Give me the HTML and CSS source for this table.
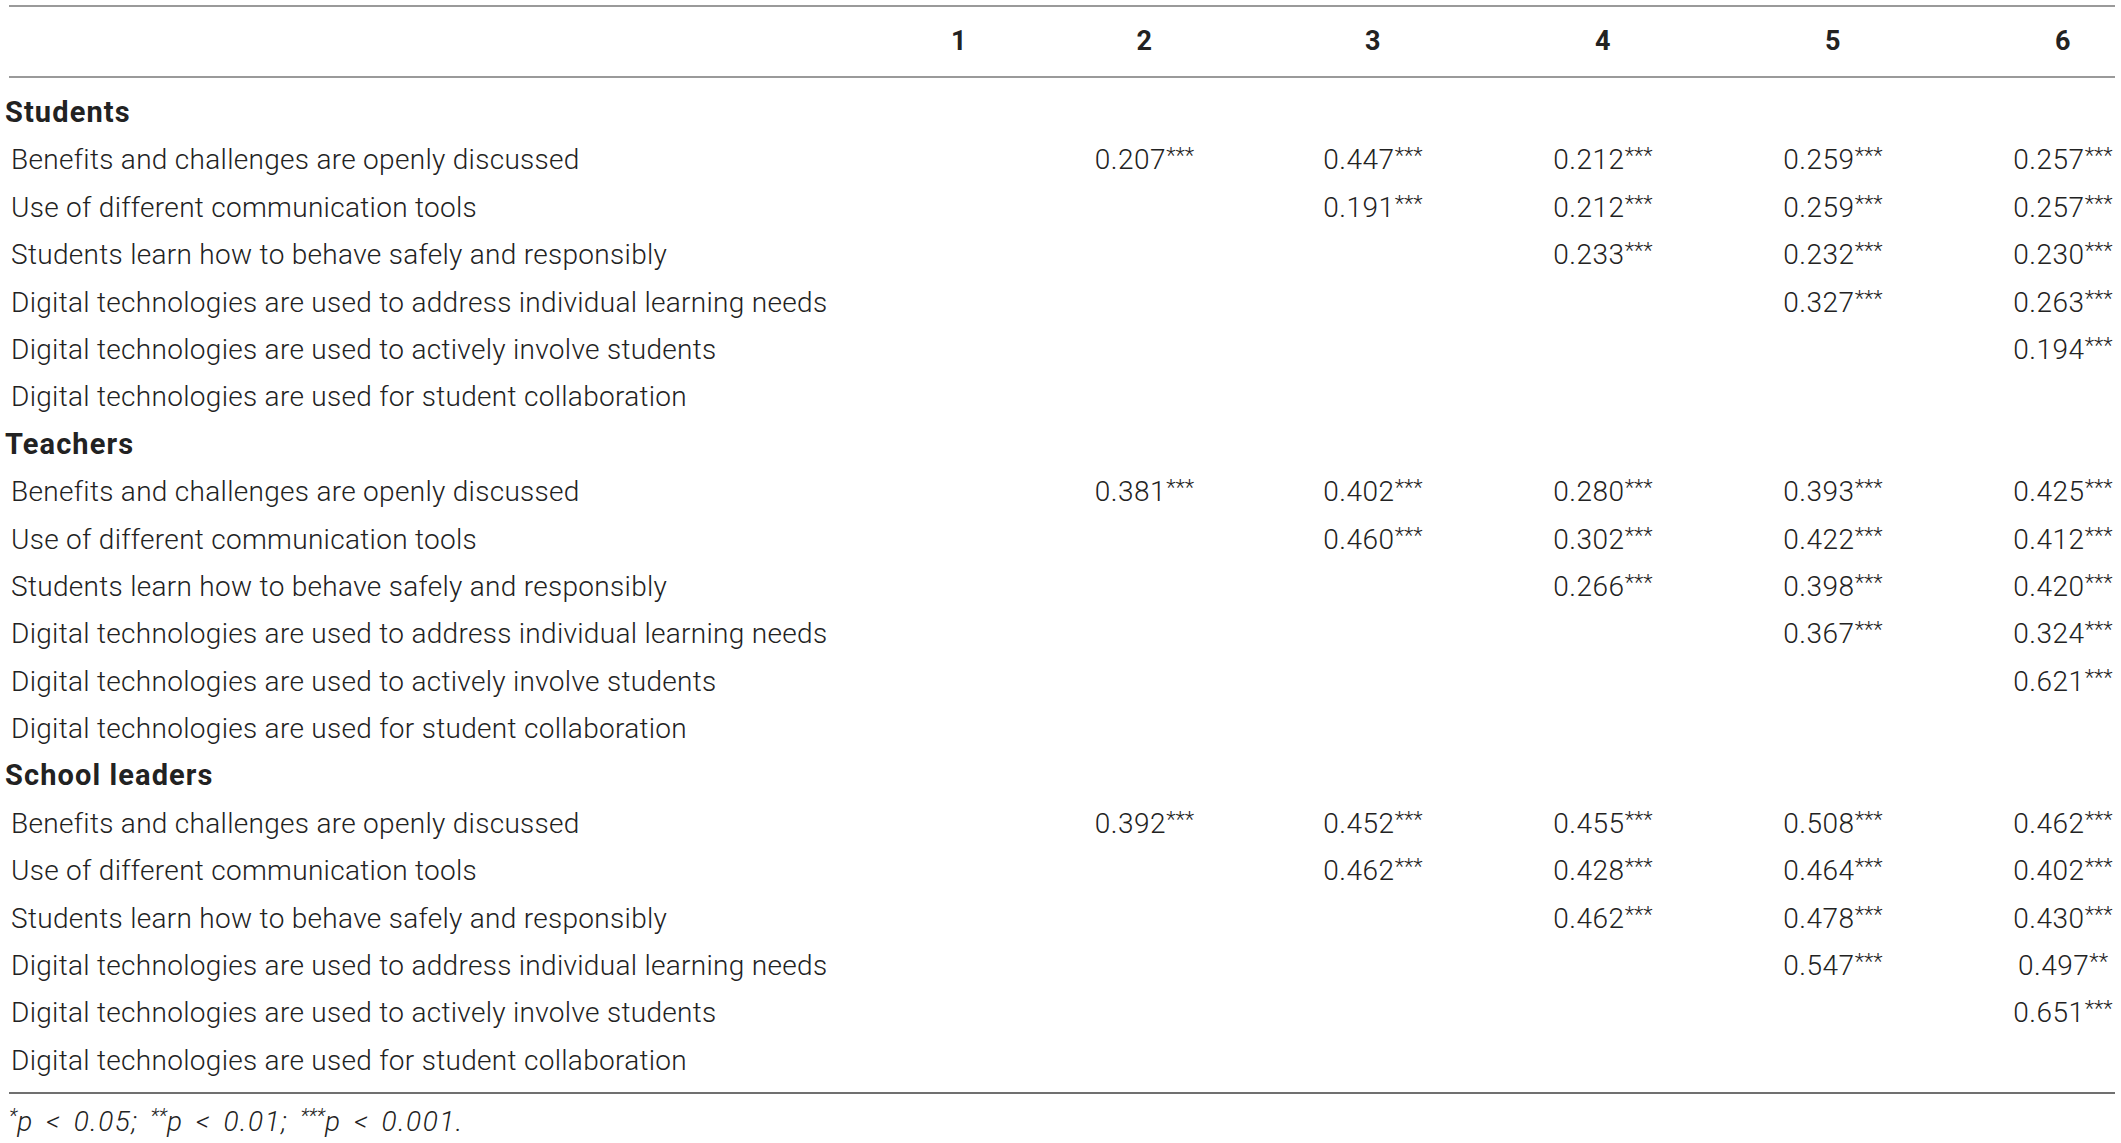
FILE: index.html
```html
<!DOCTYPE html>
<html lang="en">
<head>
<meta charset="utf-8">
<title>Correlations</title>
<link rel="stylesheet" href="styles.css">
</head>
<body>
<div class="table">
  <div class="row head">
    <div class="label"></div>
    <div class="c"><span>1</span></div>
    <div class="c"><span>2</span></div>
    <div class="c"><span>3</span></div>
    <div class="c"><span>4</span></div>
    <div class="c"><span>5</span></div>
    <div class="c"><span>6</span></div>
  </div>
  <div class="body">
    <div class="row group"><div class="label">Students</div></div>
    <div class="row"><div class="label">Benefits and challenges are openly discussed</div><div class="c"></div><div class="c"><span>0.207<sup>***</sup></span></div><div class="c"><span>0.447<sup>***</sup></span></div><div class="c"><span>0.212<sup>***</sup></span></div><div class="c"><span>0.259<sup>***</sup></span></div><div class="c"><span>0.257<sup>***</sup></span></div></div>
    <div class="row"><div class="label">Use of different communication tools</div><div class="c"></div><div class="c"></div><div class="c"><span>0.191<sup>***</sup></span></div><div class="c"><span>0.212<sup>***</sup></span></div><div class="c"><span>0.259<sup>***</sup></span></div><div class="c"><span>0.257<sup>***</sup></span></div></div>
    <div class="row"><div class="label">Students learn how to behave safely and responsibly</div><div class="c"></div><div class="c"></div><div class="c"></div><div class="c"><span>0.233<sup>***</sup></span></div><div class="c"><span>0.232<sup>***</sup></span></div><div class="c"><span>0.230<sup>***</sup></span></div></div>
    <div class="row"><div class="label">Digital technologies are used to address individual learning needs</div><div class="c"></div><div class="c"></div><div class="c"></div><div class="c"></div><div class="c"><span>0.327<sup>***</sup></span></div><div class="c"><span>0.263<sup>***</sup></span></div></div>
    <div class="row"><div class="label">Digital technologies are used to actively involve students</div><div class="c"></div><div class="c"></div><div class="c"></div><div class="c"></div><div class="c"></div><div class="c"><span>0.194<sup>***</sup></span></div></div>
    <div class="row"><div class="label">Digital technologies are used for student collaboration</div></div>

    <div class="row group"><div class="label">Teachers</div></div>
    <div class="row"><div class="label">Benefits and challenges are openly discussed</div><div class="c"></div><div class="c"><span>0.381<sup>***</sup></span></div><div class="c"><span>0.402<sup>***</sup></span></div><div class="c"><span>0.280<sup>***</sup></span></div><div class="c"><span>0.393<sup>***</sup></span></div><div class="c"><span>0.425<sup>***</sup></span></div></div>
    <div class="row"><div class="label">Use of different communication tools</div><div class="c"></div><div class="c"></div><div class="c"><span>0.460<sup>***</sup></span></div><div class="c"><span>0.302<sup>***</sup></span></div><div class="c"><span>0.422<sup>***</sup></span></div><div class="c"><span>0.412<sup>***</sup></span></div></div>
    <div class="row"><div class="label">Students learn how to behave safely and responsibly</div><div class="c"></div><div class="c"></div><div class="c"></div><div class="c"><span>0.266<sup>***</sup></span></div><div class="c"><span>0.398<sup>***</sup></span></div><div class="c"><span>0.420<sup>***</sup></span></div></div>
    <div class="row"><div class="label">Digital technologies are used to address individual learning needs</div><div class="c"></div><div class="c"></div><div class="c"></div><div class="c"></div><div class="c"><span>0.367<sup>***</sup></span></div><div class="c"><span>0.324<sup>***</sup></span></div></div>
    <div class="row"><div class="label">Digital technologies are used to actively involve students</div><div class="c"></div><div class="c"></div><div class="c"></div><div class="c"></div><div class="c"></div><div class="c"><span>0.621<sup>***</sup></span></div></div>
    <div class="row"><div class="label">Digital technologies are used for student collaboration</div></div>

    <div class="row group"><div class="label">School leaders</div></div>
    <div class="row"><div class="label">Benefits and challenges are openly discussed</div><div class="c"></div><div class="c"><span>0.392<sup>***</sup></span></div><div class="c"><span>0.452<sup>***</sup></span></div><div class="c"><span>0.455<sup>***</sup></span></div><div class="c"><span>0.508<sup>***</sup></span></div><div class="c"><span>0.462<sup>***</sup></span></div></div>
    <div class="row"><div class="label">Use of different communication tools</div><div class="c"></div><div class="c"></div><div class="c"><span>0.462<sup>***</sup></span></div><div class="c"><span>0.428<sup>***</sup></span></div><div class="c"><span>0.464<sup>***</sup></span></div><div class="c"><span>0.402<sup>***</sup></span></div></div>
    <div class="row"><div class="label">Students learn how to behave safely and responsibly</div><div class="c"></div><div class="c"></div><div class="c"></div><div class="c"><span>0.462<sup>***</sup></span></div><div class="c"><span>0.478<sup>***</sup></span></div><div class="c"><span>0.430<sup>***</sup></span></div></div>
    <div class="row"><div class="label">Digital technologies are used to address individual learning needs</div><div class="c"></div><div class="c"></div><div class="c"></div><div class="c"></div><div class="c"><span>0.547<sup>***</sup></span></div><div class="c"><span>0.497<sup>**</sup></span></div></div>
    <div class="row"><div class="label">Digital technologies are used to actively involve students</div><div class="c"></div><div class="c"></div><div class="c"></div><div class="c"></div><div class="c"></div><div class="c"><span>0.651<sup>***</sup></span></div></div>
    <div class="row"><div class="label">Digital technologies are used for student collaboration</div></div>
  </div>
  <p class="note"><sup>*</sup>p &lt; 0.05; <sup>**</sup>p &lt; 0.01; <sup>***</sup>p &lt; 0.001.</p>
</div>
</body>
</html>
```

FILE: styles.css
```css
html, body {
  margin: 0;
  padding: 0;
  background: #ffffff;
}

body {
  font-family: "Roboto", "Liberation Sans", Arial, sans-serif;
  font-weight: 300;
  color: #222222;
  font-size: 28px;
}

.table {
  width: 2106px;
  margin: 5px 0 0 9px;
}

.row {
  display: grid;
  grid-template-columns: 1fr 104px 185.5px 228.5px 230px 230px 230px;
  height: 47.4px;
  line-height: 47.4px;
  white-space: nowrap;
  letter-spacing: 0.3px;
}

.label {
  padding-left: 2px;
}

.c {
  display: flex;
  justify-content: flex-end;
}

.c span {
  display: block;
  width: 104px;
  text-align: center;
  letter-spacing: 0.5px;
}

sup {
  font-size: 22px;
  line-height: 0;
  vertical-align: 6px;
  letter-spacing: 0;
}

.head {
  height: 69px;
  line-height: 69px;
  border-top: 2px solid #9a9a9a;
  border-bottom: 2px solid #9a9a9a;
  font-weight: 700;
  font-size: 27px;
  letter-spacing: 0;
}

.body {
  padding: 11px 0 8px;
  border-bottom: 2px solid #707070;
}

.group .label {
  font-weight: 700;
  font-size: 29px;
  margin-left: -4px;
  padding-left: 0;
  letter-spacing: 1.1px;
}

.note {
  margin: 0;
  padding-left: 0;
  font-style: italic;
  font-size: 28px;
  line-height: 56px;
  letter-spacing: 1.5px;
  word-spacing: 4px;
}

.note sup {
  font-size: 20px;
  vertical-align: 8px;
}
```
